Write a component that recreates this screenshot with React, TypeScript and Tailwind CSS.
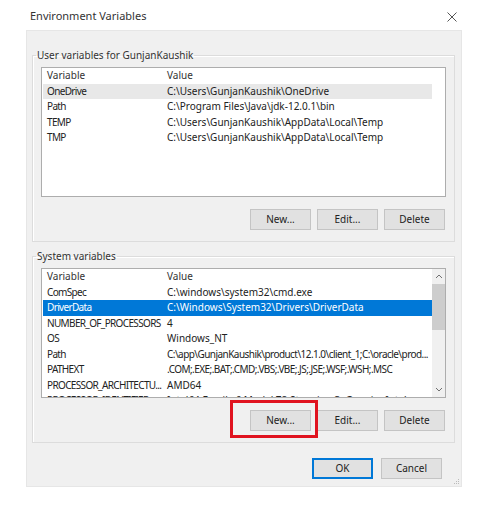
import React from 'react';

interface Row {
  name: string;
  value: string;
  tight?: boolean;
}

const userRows: Row[] = [
  { name: 'OneDrive', value: 'C:\\Users\\GunjanKaushik\\OneDrive' },
  { name: 'Path', value: 'C:\\Program Files\\Java\\jdk-12.0.1\\bin' },
  { name: 'TEMP', value: 'C:\\Users\\GunjanKaushik\\AppData\\Local\\Temp' },
  { name: 'TMP', value: 'C:\\Users\\GunjanKaushik\\AppData\\Local\\Temp' },
];

const systemRows: Row[] = [
  { name: 'ComSpec', value: 'C:\\windows\\system32\\cmd.exe' },
  { name: 'DriverData', value: 'C:\\Windows\\System32\\Drivers\\DriverData' },
  { name: 'NUMBER_OF_PROCESSORS', value: '4' },
  { name: 'OS', value: 'Windows_NT' },
  { name: 'Path', value: 'C:\\app\\GunjanKaushik\\product\\12.1.0\\client_1;C:\\oracle\\prod...', tight: true },
  { name: 'PATHEXT', value: '.COM;.EXE;.BAT;.CMD;.VBS;.VBE;.JS;.JSE;.WSF;.WSH;.MSC', tight: true },
  { name: 'PROCESSOR_ARCHITECTU...', value: 'AMD64' },
  { name: 'PROCESSOR_IDENTIFIER', value: 'Intel64 Family 6 Model 78 Stepping 3, GenuineIntel' },
];

function Button({ label, primary }: { label: string; primary?: boolean }) {
  return (
    <button
      className={
        primary
          ? 'w-[61px] h-[21px] bg-[#e1e1e1] border border-[#0078d7] shadow-[inset_0_0_0_1px_#0078d7] text-[10px] text-[#222]'
          : 'w-[61px] h-[21px] bg-[#e1e1e1] border border-[#c4c4c4] text-[10px] text-[#222]'
      }
    >
      {label}
    </button>
  );
}

function ListView({ rows, selected, selectedFocus, scroll }: { rows: Row[]; selected: number; selectedFocus?: boolean; scroll?: boolean }) {
  return (
    <div className="h-[130px] mx-[8px] mt-[4px] bg-white border border-[#adadad] flex overflow-hidden">
      <div className="w-[390px] pl-[1px] overflow-hidden">
        <div className="h-[15.5px] flex items-center text-[#333]">
          <div className="w-[120px] pl-[4px]">Variable</div>
          <div className="pl-[4px]">Value</div>
        </div>
        {rows.map((r, i) => {
          const sel = i === selected;
          const cls = sel
            ? selectedFocus
              ? 'bg-[#0078d7] text-white'
              : 'bg-[#e8e8e8] text-[#222]'
            : 'text-[#222]';
          return (
            <div key={r.name + i} className={'h-[15.5px] flex items-center whitespace-nowrap ' + cls}>
              <div className="w-[120px] shrink-0 pl-[4px] overflow-hidden tracking-[-0.65px]">{r.name}</div>
              <div className={r.tight ? 'flex-1 pl-[4px] overflow-hidden tracking-[-0.55px]' : 'flex-1 pl-[4px] overflow-hidden'}>{r.value}</div>
            </div>
          );
        })}
      </div>
      {scroll && (
        <div className="w-[13px] ml-auto bg-[#f0f0f0] flex flex-col items-center">
          <div className="h-[15px] flex items-center justify-center">
            <svg width="8" height="5" viewBox="0 0 8 5"><path d="M1 4 L4 1 L7 4" fill="none" stroke="#707070" strokeWidth="1" /></svg>
          </div>
          <div className="w-full h-[46px] bg-[#cdcdcd]" />
          <div className="flex-1" />
          <div className="h-[15px] flex items-center justify-center">
            <svg width="8" height="5" viewBox="0 0 8 5"><path d="M1 1 L4 4 L7 1" fill="none" stroke="#707070" strokeWidth="1" /></svg>
          </div>
        </div>
      )}
    </div>
  );
}

export default function App() {
  return (
    <div className="w-[486px] h-[512px] bg-white text-[10px]" style={{ fontFamily: '"Noto Sans", "Liberation Sans", sans-serif' }}>
      <div className="h-[30px] flex items-center justify-between pl-[30px] pr-[29px] pt-[3px]">
        <span className="text-[11px] text-[#333]">Environment Variables</span>
        <svg width="10" height="10" viewBox="0 0 10 10">
          <path d="M0.5 0.5 L9.5 9.5 M9.5 0.5 L0.5 9.5" stroke="#555" strokeWidth="1" />
        </svg>
      </div>
      <div className="relative ml-[26px] w-[436px] h-[457px] bg-[#f0f0f0] border border-[#e6e6e6] pl-[5px] pr-[6px]">
        <fieldset className="mt-[17px] h-[194px] border border-[#dcdcdc] shadow-[inset_1px_1px_0_#fff]">
          <legend className="ml-[3px] px-[1px] text-[#333]">User variables for GunjanKaushik</legend>
          <ListView rows={userRows} selected={0} />
          <div className="flex justify-end gap-[6px] mt-[12px] mr-[9px]">
            <Button label="New..." />
            <Button label="Edit..." />
            <Button label="Delete" />
          </div>
        </fieldset>
        <fieldset className="mt-[7px] h-[194px] border border-[#dcdcdc] shadow-[inset_1px_1px_0_#fff]">
          <legend className="ml-[3px] px-[1px] text-[#333]">System variables</legend>
          <ListView rows={systemRows} selected={1} selectedFocus scroll />
          <div className="flex justify-end gap-[6px] mt-[12px] mr-[9px]">
            <div className="relative">
              <Button label="New..." />
              <div className="absolute -left-[20px] -top-[10px] w-[88px] h-[38px] border-[3px] border-[#e0131f]" />
            </div>
            <Button label="Edit..." />
            <Button label="Delete" />
          </div>
        </fieldset>
        <div className="flex justify-end gap-[8px] mt-[15px] mr-[13px]">
          <Button label="OK" primary />
          <Button label="Cancel" />
        </div>
        <svg className="absolute right-[1px] bottom-[1px]" width="6" height="6" viewBox="0 0 6 6">
          <rect x="4" y="0" width="1" height="1" fill="#bbb" />
          <rect x="2" y="2" width="1" height="1" fill="#bbb" />
          <rect x="4" y="2" width="1" height="1" fill="#bbb" />
          <rect x="0" y="4" width="1" height="1" fill="#bbb" />
          <rect x="2" y="4" width="1" height="1" fill="#bbb" />
          <rect x="4" y="4" width="1" height="1" fill="#bbb" />
        </svg>
      </div>
    </div>
  );
}
